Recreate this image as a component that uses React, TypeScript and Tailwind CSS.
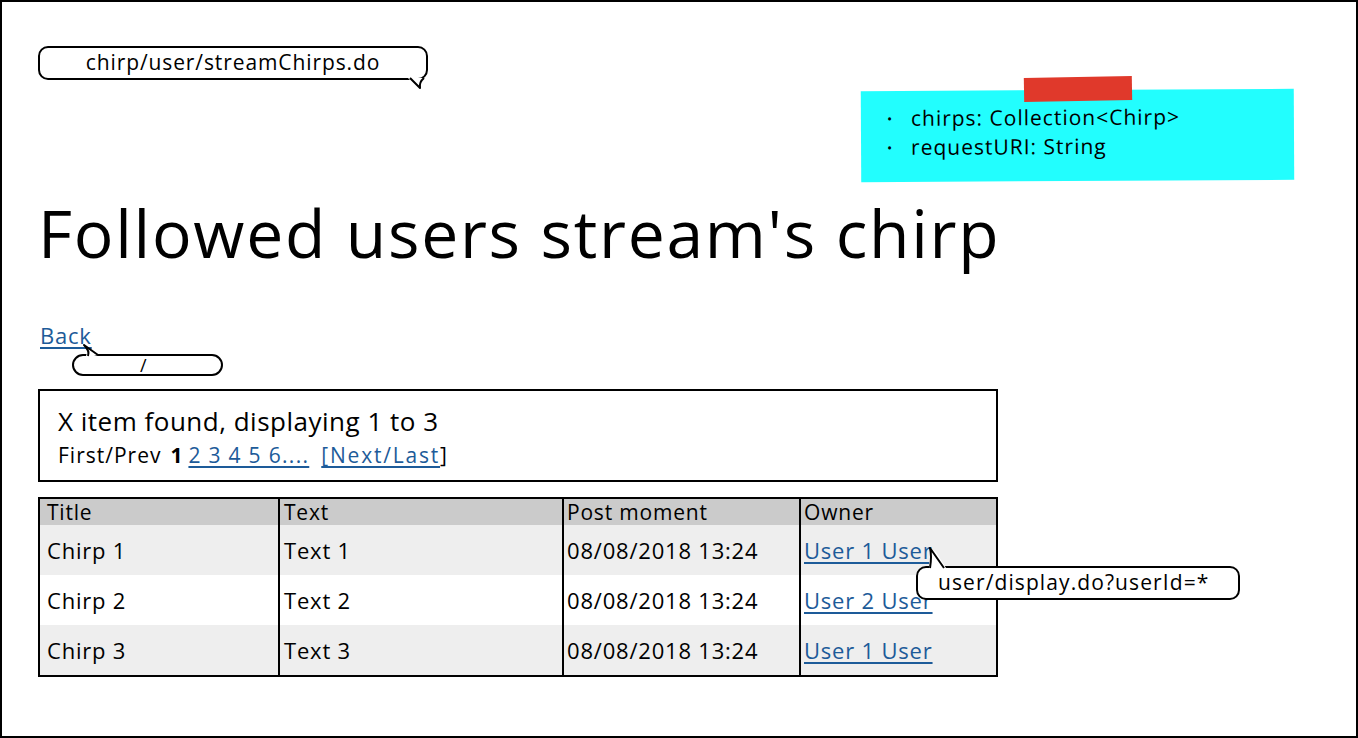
import React from "react";

const font = { fontFamily: '"Open Sans", "Noto Sans", sans-serif' };

interface Row {
    title: string;
    text: string;
    moment: string;
    owner: string;
}

const rows: Row[] = [
    { title: "Chirp 1", text: "Text 1", moment: "08/08/2018 13:24", owner: "User 1 User" },
    { title: "Chirp 2", text: "Text 2", moment: "08/08/2018 13:24", owner: "User 2 User" },
    { title: "Chirp 3", text: "Text 3", moment: "08/08/2018 13:24", owner: "User 1 User" },
];

export default function App() {
    return (
        <div style={font} className="relative w-[1358px] h-[738px] overflow-hidden bg-white border-2 border-black text-black">
            <div className="flex flex-col pl-[36px] pt-[44px]">
                {/* url bubble */}
                <div className="relative w-[390px]">
                    <div className="h-[34px] border-2 border-black rounded-[10px] flex items-center justify-center text-[21px] tracking-[0.9px] bg-white">
                        chirp/user/streamChirps.do
                    </div>
                    <svg className="absolute left-[368px] top-[30px]" width="24" height="14" viewBox="0 0 24 14">
                        <path d="M2 2 L12 2 Q16 4 14 12 L6 6 Z" fill="white" stroke="none" />
                        <path d="M4 2 L14 12 Q13 6 18 2" fill="white" stroke="black" strokeWidth="2" strokeLinejoin="round" />
                    </svg>
                </div>

                {/* heading */}
                <h1 className="mt-[112px] text-[66px] leading-[80px] tracking-[1.7px] font-medium">Followed users stream's chirp</h1>

                {/* back link */}
                <div className="relative mt-[51px] h-[24px]">
                    <a className="text-[22px] leading-[24px] tracking-[0.8px] text-[#1d5b99] underline underline-offset-[3px] ml-[2px]">Back</a>
                    <div className="absolute left-[34px] top-[31px] w-[151px] h-[22px] border-2 border-black rounded-full flex items-center bg-white">
                        <span className="ml-[66px] text-[18px] leading-none">/</span>
                    </div>
                    <svg className="absolute left-[44px] top-[20px]" width="22" height="14" viewBox="0 0 22 14">
                        <path d="M4 13 L12 13 L16 12 L6 6 Z" fill="white" />
                        <path d="M6 13 Q8 8 2 2 L16 12" fill="none" stroke="black" strokeWidth="2" strokeLinejoin="round" />
                    </svg>
                </div>

                {/* pager box */}
                <div className="mt-[42px] w-[960px] h-[93px] border-2 border-black pl-[18px] pt-[14px]">
                    <div className="text-[26px] leading-[32px] tracking-[0.5px]">X item found, displaying 1 to 3</div>
                    <div className="mt-[2px] text-[21px] leading-[32px] tracking-[1px] flex items-baseline">
                        <span>First/Prev</span>
                        <span className="font-bold ml-[9px]">1</span>
                        <a className="ml-[5px] tracking-[1.3px] text-[#1d5b99] underline underline-offset-[3px]">2 3 4 5 6....</a>
                        <a className="ml-[12px] tracking-[1.8px] text-[#1d5b99] underline underline-offset-[3px]">[Next/Last</a>
                        <span>]</span>
                    </div>
                </div>

                {/* table */}
                <div className="mt-[15px] w-[960px] border-2 border-black text-[22px] tracking-[0.8px]">
                    <div className="flex h-[26px] bg-[#cbcbcb] leading-[26px] text-[21px]">
                        <div className="w-[240px] border-r-2 border-black pl-[7px]">Title</div>
                        <div className="w-[284px] border-r-2 border-black pl-[4px]">Text</div>
                        <div className="w-[237px] border-r-2 border-black pl-[3px]">Post moment</div>
                        <div className="flex-1 pl-[3px]">Owner</div>
                    </div>
                    {rows.map((r, i) => (
                        <div key={i} className={`flex h-[50px] items-center ${i % 2 === 0 ? "bg-[#eeeeee]" : "bg-white"}`}>
                            <div className="w-[240px] h-full flex items-center border-r-2 border-black pl-[7px]">{r.title}</div>
                            <div className="w-[284px] h-full flex items-center border-r-2 border-black pl-[4px]">{r.text}</div>
                            <div className="w-[237px] h-full flex items-center border-r-2 border-black pl-[3px]">{r.moment}</div>
                            <div className="flex-1 h-full flex items-center pl-[3px]">
                                <a className="text-[#1d5b99] underline underline-offset-[3px]">{r.owner}</a>
                            </div>
                        </div>
                    ))}
                </div>
            </div>

            {/* sticky note */}
            <div className="absolute left-[859px] top-[88px] w-[433px] h-[91px] bg-[#22fefe] -rotate-[0.3deg] pl-[26px] pt-[13px] text-[21px] leading-[29px] tracking-[1px]">
                <div className="flex items-center"><span className="w-[24px] text-[14px]">•</span>chirps: Collection&lt;Chirp&gt;</div>
                <div className="flex items-center"><span className="w-[24px] text-[14px]">•</span>requestURI: String</div>
            </div>
            <div className="absolute left-[1022px] top-[75px] w-[108px] h-[24px] bg-[#e0392b] -rotate-[1deg]" />

            {/* owner tooltip bubble */}
            <div className="absolute left-[914px] top-[564px] w-[324px] h-[34px] border-2 border-black rounded-[10px] bg-white flex items-center pl-[20px] text-[21px] tracking-[1.1px]">
                user/display.do?userId=*
            </div>
            <svg className="absolute left-[924px] top-[542px]" width="24" height="26" viewBox="0 0 24 26">
                <path d="M3 24 L20 24 L10 8 L4 4 Z" fill="white" />
                <path d="M4 24 Q6 12 4 4 L18 24" fill="none" stroke="black" strokeWidth="2" strokeLinejoin="round" />
            </svg>
        </div>
    );
}
